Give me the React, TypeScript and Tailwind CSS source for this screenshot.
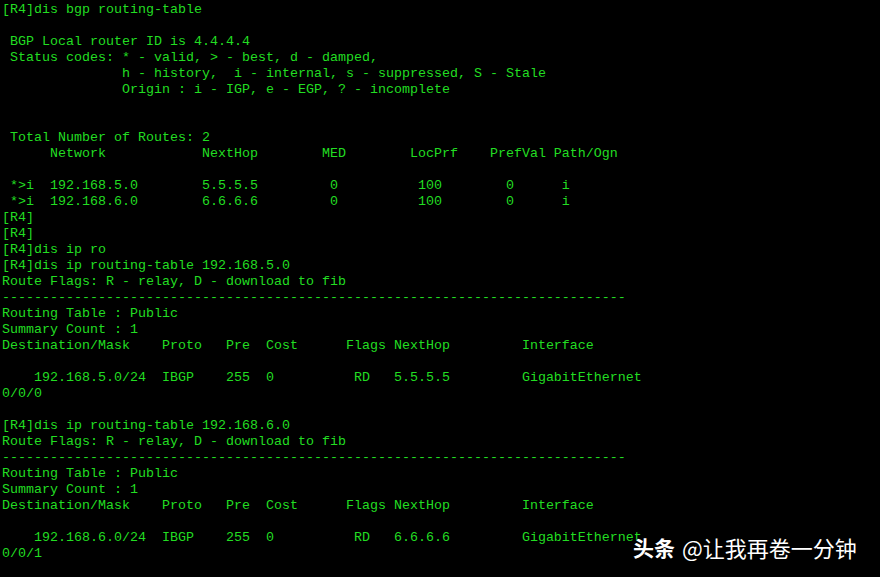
import React from 'react';

const LINES: string[] = [
  '[R4]dis bgp routing-table',
  '',
  ' BGP Local router ID is 4.4.4.4',
  ' Status codes: * - valid, > - best, d - damped,',
  '               h - history,  i - internal, s - suppressed, S - Stale',
  '               Origin : i - IGP, e - EGP, ? - incomplete',
  '',
  '',
  ' Total Number of Routes: 2',
  '      Network            NextHop        MED        LocPrf    PrefVal Path/Ogn',
  '',
  ' *>i  192.168.5.0        5.5.5.5         0          100        0      i',
  ' *>i  192.168.6.0        6.6.6.6         0          100        0      i',
  '[R4]',
  '[R4]',
  '[R4]dis ip ro',
  '[R4]dis ip routing-table 192.168.5.0',
  'Route Flags: R - relay, D - download to fib',
  '-'.repeat(78),
  'Routing Table : Public',
  'Summary Count : 1',
  'Destination/Mask    Proto   Pre  Cost      Flags NextHop         Interface',
  '',
  '    192.168.5.0/24  IBGP    255  0          RD   5.5.5.5         GigabitEthernet',
  '0/0/0',
  '',
  '[R4]dis ip routing-table 192.168.6.0',
  'Route Flags: R - relay, D - download to fib',
  '-'.repeat(78),
  'Routing Table : Public',
  'Summary Count : 1',
  'Destination/Mask    Proto   Pre  Cost      Flags NextHop         Interface',
  '',
  '    192.168.6.0/24  IBGP    255  0          RD   6.6.6.6         GigabitEthernet',
  '0/0/1',
];

const App: React.FC = () => {
  return (
    <div className="relative w-[880px] h-[577px] overflow-hidden bg-black">
      <pre className="pt-[2px] pl-[2px] m-0 text-[#22dd22] text-[13.333px] leading-[16px] font-['Courier_New','Liberation_Mono',monospace] whitespace-pre">
        {LINES.join('\n')}
      </pre>
      {/* watermark */}
      <div className="absolute left-[633px] top-[534px] flex items-center gap-[7px] text-white leading-[26px] font-['Noto_Sans_CJK_SC',sans-serif] [text-shadow:0_0_2px_rgba(0,0,0,0.8)]">
        <span className="font-bold text-[21px]">头条</span>
        <span className="text-[22px]">@让我再卷一分钟</span>
      </div>
    </div>
  );
};

export default App;
